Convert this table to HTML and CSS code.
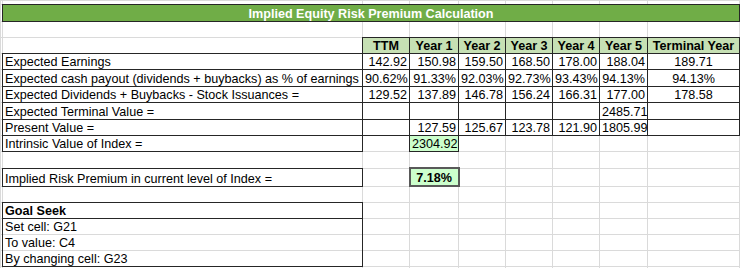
FILE: index.html
```html
<!DOCTYPE html>
<html lang="en">
<head>
<meta charset="utf-8">
<title>Implied Equity Risk Premium Calculation</title>
<link rel="stylesheet" href="styles.css">
</head>
<body>
<table class="sheet">
  <colgroup>
    <col class="c-a"><col class="c-b"><col class="c-c"><col class="c-d"><col class="c-e"><col class="c-f"><col class="c-g"><col class="c-h"><col class="c-i"><col class="c-j">
  </colgroup>
  <tr class="h4"><td></td><td></td><td></td><td></td><td></td><td></td><td></td><td></td><td></td><td></td></tr>
  <tr class="h17"><td></td><td class="title" colspan="8">Implied Equity Risk Premium Calculation</td><td></td></tr>
  <tr class="h16"><td></td><td></td><td></td><td></td><td></td><td></td><td></td><td></td><td></td><td></td></tr>
  <tr class="h16"><td></td><td></td><td class="hd">TTM</td><td class="hd">Year 1</td><td class="hd">Year 2</td><td class="hd">Year 3</td><td class="hd">Year 4</td><td class="hd">Year 5</td><td class="hd">Terminal Year</td><td></td></tr>
  <tr class="h16"><td></td><td class="lbl box">Expected Earnings</td><td class="num box">142.92</td><td class="num box">150.98</td><td class="num box">159.50</td><td class="num box">168.50</td><td class="num box">178.00</td><td class="num box">188.04</td><td class="ctr box">189.71</td><td></td></tr>
  <tr class="h17"><td></td><td class="lbl box">Expected cash payout (dividends + buybacks) as % of earnings</td><td class="num box">90.62%</td><td class="num box">91.33%</td><td class="num box">92.03%</td><td class="num box">92.73%</td><td class="num box">93.43%</td><td class="num box">94.13%</td><td class="ctr box">94.13%</td><td></td></tr>
  <tr class="h16"><td></td><td class="lbl box">Expected Dividends + Buybacks - Stock Issuances =</td><td class="num box">129.52</td><td class="num box">137.89</td><td class="num box">146.78</td><td class="num box">156.24</td><td class="num box">166.31</td><td class="num box">177.00</td><td class="ctr box">178.58</td><td></td></tr>
  <tr class="h17"><td></td><td class="lbl box">Expected Terminal Value =</td><td class="num box"></td><td class="num box"></td><td class="num box"></td><td class="num box"></td><td class="num box"></td><td class="num box">2485.71</td><td class="ctr box"></td><td></td></tr>
  <tr class="h16"><td></td><td class="lbl box">Present Value =</td><td class="num box"></td><td class="num box">127.59</td><td class="num box">125.67</td><td class="num box">123.78</td><td class="num box">121.90</td><td class="num box">1805.99</td><td class="ctr box"></td><td></td></tr>
  <tr class="h16"><td></td><td class="lbl box">Intrinsic Value of Index =</td><td></td><td class="num box mint">2304.92</td><td></td><td></td><td></td><td></td><td></td><td></td></tr>
  <tr class="h16"><td></td><td></td><td></td><td></td><td></td><td></td><td></td><td></td><td></td><td></td></tr>
  <tr class="h17"><td></td><td class="lbl box">Implied Risk Premium in current level of Index =</td><td></td><td class="ctr mint strong box2">7.18%</td><td></td><td></td><td></td><td></td><td></td><td></td></tr>
  <tr class="h16"><td></td><td></td><td></td><td></td><td></td><td></td><td></td><td></td><td></td><td></td></tr>
  <tr class="h16"><td></td><td class="lbl box strong">Goal Seek</td><td></td><td></td><td></td><td></td><td></td><td></td><td></td><td></td></tr>
  <tr class="h16"><td></td><td class="lbl sides">Set cell: G21</td><td></td><td></td><td></td><td></td><td></td><td></td><td></td><td></td></tr>
  <tr class="h16"><td></td><td class="lbl sides">To value: C4</td><td></td><td></td><td></td><td></td><td></td><td></td><td></td><td></td></tr>
  <tr class="h16"><td></td><td class="lbl sides last">By changing cell: G23</td><td></td><td></td><td></td><td></td><td></td><td></td><td></td><td></td></tr>
  <tr class="h4"><td></td><td></td><td></td><td></td><td></td><td></td><td></td><td></td><td></td><td></td></tr>
</table>
</body>
</html>
```
FILE: styles.css
```css
html, body {
  margin: 0;
  padding: 0;
  background: #ffffff;
}

body {
  width: 740px;
  height: 268px;
  overflow: hidden;
  font-family: "Liberation Sans", Arial, sans-serif;
  font-size: 12.6px;
  color: #000000;
}

.sheet {
  border-collapse: collapse;
  table-layout: fixed;
  width: 741px;
}

.sheet td {
  border: 1px solid #dadada;
  padding: 0 2px;
  white-space: nowrap;
  overflow: hidden;
  vertical-align: bottom;
  line-height: 14px;
}

.c-a { width: 2px; }
.c-b { width: 360px; }
.c-c { width: 47px; }
.c-d { width: 49px; }
.c-e { width: 47px; }
.c-f { width: 47px; }
.c-g { width: 47px; }
.c-h { width: 48px; }
.c-i { width: 92px; }
.c-j { width: 2px; }

.h4 td { height: 3px; padding: 0; line-height: 1px; }
.h16 td { height: 15px; }
.h17 td { height: 16px; }

.title {
  background: #70ad47;
  color: #ffffff;
  font-weight: bold;
  text-align: center;
  border: 1px double #262626 !important;
}

.hd {
  background: #c6e0b4;
  font-weight: bold;
  text-align: center;
  border: 1px double #262626 !important;
}

.lbl { text-align: left; }
.num { text-align: right; }
.ctr { text-align: center; }
.strong { font-weight: bold; }

.box { border: 1px double #262626 !important; }
.box2 { border: 2px solid #595959 !important; }
.mint { background: #ccffcc; }

.sides {
  border-left: 1px double #262626 !important;
  border-right: 1px double #262626 !important;
}
.sides.last { border-bottom: 1px double #262626 !important; }
```
